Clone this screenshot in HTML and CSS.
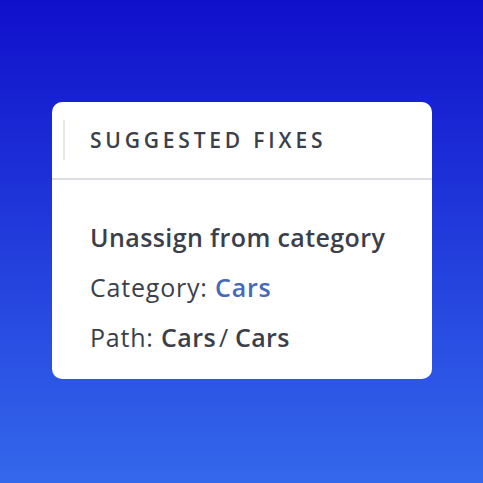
FILE: index.html
```html
<!DOCTYPE html>
<html>
<head>
<meta charset="utf-8">
<link rel="stylesheet" href="styles.css">
</head>
<body>
<div class="card">
  <div class="header">
    <span class="header-bar"></span>
    <h2 class="title">SUGGESTED FIXES</h2>
  </div>
  <div class="content">
    <p class="fix-name">Unassign from category</p>
    <p class="line">Category: <a class="link">Cars</a></p>
    <p class="line">Path: <strong class="strong">Cars</strong><span class="sep">/</span><strong class="strong">Cars</strong></p>
  </div>
</div>
</body>
</html>
```

FILE: styles.css
```css
html, body {
  margin: 0;
  padding: 0;
}
body {
  width: 483px;
  height: 483px;
  background: linear-gradient(180deg, #1010cb 0%, #3468ec 100%);
  font-family: "Open Sans", "Liberation Sans", sans-serif;
  color: #3b3f4b;
  padding-top: 102px;
  box-sizing: border-box;
}
.card {
  margin-left: 52px;
  width: 380px;
  height: 277px;
  background: #fff;
  border-radius: 10px;
  overflow: hidden;
}
.header {
  height: 76px;
  display: flex;
  align-items: center;
  padding-left: 11px;
  border-bottom: 2px solid #dcdde2;
}
.header-bar {
  width: 2px;
  height: 40px;
  background: #e6e6ec;
  margin-right: 25px;
}
.title {
  margin: 0;
  font-size: 21px;
  font-weight: 600;
  letter-spacing: 3.8px;
  color: #3b3f4b;
}
.content {
  padding: 42px 38px 0;
}
.fix-name {
  margin: 0;
  font-size: 25px;
  font-weight: 600;
  letter-spacing: 0.4px;
  line-height: 30px;
}
.line {
  margin: 20px 0 0;
  font-size: 25px;
  letter-spacing: 0.8px;
  line-height: 30px;
}
.link {
  color: #4569b9;
  font-weight: 600;
}
.strong {
  font-weight: 600;
  letter-spacing: 0.4px;
}
.sep {
  margin: 0 6px 0 3px;
}
```
